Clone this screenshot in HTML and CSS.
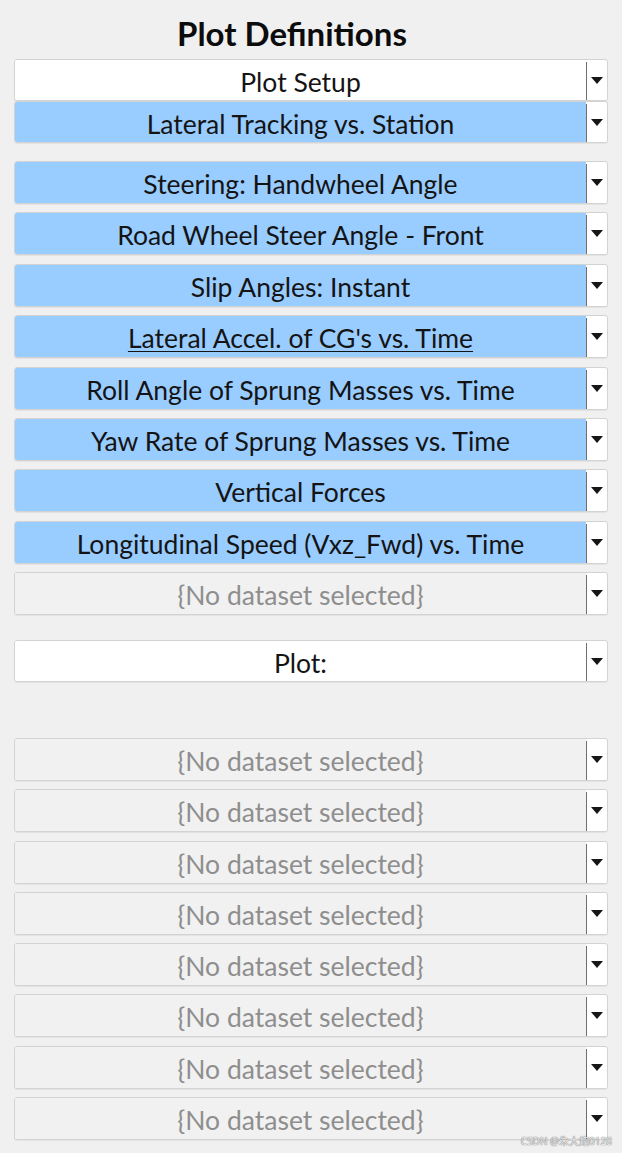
FILE: index.html
```html
<!DOCTYPE html>
<html lang="en">
<head>
<meta charset="utf-8">
<title>Plot Definitions</title>
<link rel="stylesheet" href="styles.css">
</head>
<body>
<div class="panel">
  <h1 class="title">Plot Definitions</h1>

  <div class="group group-top">
    <div class="combo combo-white"><span class="label">Plot Setup</span><span class="btn"><svg class="arrow" viewBox="0 0 12 7"><polygon points="0,0 12,0 6,7"/></svg></span></div>
    <div class="combo combo-blue"><span class="label">Lateral Tracking vs. Station</span><span class="btn"><svg class="arrow" viewBox="0 0 12 7"><polygon points="0,0 12,0 6,7"/></svg></span></div>
  </div>

  <div class="group group-list">
    <div class="combo combo-blue"><span class="label">Steering: Handwheel Angle</span><span class="btn"><svg class="arrow" viewBox="0 0 12 7"><polygon points="0,0 12,0 6,7"/></svg></span></div>
    <div class="combo combo-blue"><span class="label">Road Wheel Steer Angle - Front</span><span class="btn"><svg class="arrow" viewBox="0 0 12 7"><polygon points="0,0 12,0 6,7"/></svg></span></div>
    <div class="combo combo-blue"><span class="label">Slip Angles: Instant</span><span class="btn"><svg class="arrow" viewBox="0 0 12 7"><polygon points="0,0 12,0 6,7"/></svg></span></div>
    <div class="combo combo-blue"><span class="label label-underline">Lateral Accel. of CG's vs. Time</span><span class="btn"><svg class="arrow" viewBox="0 0 12 7"><polygon points="0,0 12,0 6,7"/></svg></span></div>
    <div class="combo combo-blue"><span class="label">Roll Angle of Sprung Masses vs. Time</span><span class="btn"><svg class="arrow" viewBox="0 0 12 7"><polygon points="0,0 12,0 6,7"/></svg></span></div>
    <div class="combo combo-blue"><span class="label">Yaw Rate of Sprung Masses vs. Time</span><span class="btn"><svg class="arrow" viewBox="0 0 12 7"><polygon points="0,0 12,0 6,7"/></svg></span></div>
    <div class="combo combo-blue"><span class="label">Vertical Forces</span><span class="btn"><svg class="arrow" viewBox="0 0 12 7"><polygon points="0,0 12,0 6,7"/></svg></span></div>
    <div class="combo combo-blue"><span class="label">Longitudinal Speed (Vxz_Fwd) vs. Time</span><span class="btn"><svg class="arrow" viewBox="0 0 12 7"><polygon points="0,0 12,0 6,7"/></svg></span></div>
    <div class="combo combo-empty"><span class="label">{No dataset selected}</span><span class="btn"><svg class="arrow" viewBox="0 0 12 7"><polygon points="0,0 12,0 6,7"/></svg></span></div>
  </div>

  <div class="combo combo-white combo-plot"><span class="label">Plot:</span><span class="btn"><svg class="arrow" viewBox="0 0 12 7"><polygon points="0,0 12,0 6,7"/></svg></span></div>

  <div class="group group-list group-bottom">
    <div class="combo combo-empty"><span class="label">{No dataset selected}</span><span class="btn"><svg class="arrow" viewBox="0 0 12 7"><polygon points="0,0 12,0 6,7"/></svg></span></div>
    <div class="combo combo-empty"><span class="label">{No dataset selected}</span><span class="btn"><svg class="arrow" viewBox="0 0 12 7"><polygon points="0,0 12,0 6,7"/></svg></span></div>
    <div class="combo combo-empty"><span class="label">{No dataset selected}</span><span class="btn"><svg class="arrow" viewBox="0 0 12 7"><polygon points="0,0 12,0 6,7"/></svg></span></div>
    <div class="combo combo-empty"><span class="label">{No dataset selected}</span><span class="btn"><svg class="arrow" viewBox="0 0 12 7"><polygon points="0,0 12,0 6,7"/></svg></span></div>
    <div class="combo combo-empty"><span class="label">{No dataset selected}</span><span class="btn"><svg class="arrow" viewBox="0 0 12 7"><polygon points="0,0 12,0 6,7"/></svg></span></div>
    <div class="combo combo-empty"><span class="label">{No dataset selected}</span><span class="btn"><svg class="arrow" viewBox="0 0 12 7"><polygon points="0,0 12,0 6,7"/></svg></span></div>
    <div class="combo combo-empty"><span class="label">{No dataset selected}</span><span class="btn"><svg class="arrow" viewBox="0 0 12 7"><polygon points="0,0 12,0 6,7"/></svg></span></div>
    <div class="combo combo-empty"><span class="label">{No dataset selected}</span><span class="btn"><svg class="arrow" viewBox="0 0 12 7"><polygon points="0,0 12,0 6,7"/></svg></span></div>
  </div>

  <div class="watermark">CSDN @朱大炮0128</div>
</div>
</body>
</html>
```

FILE: styles.css
```css
html, body {
  margin: 0;
  padding: 0;
  background: #f0f0f0;
}

body {
  font-family: Lato, "Noto Sans", "Noto Sans CJK SC", sans-serif;
  color: #111;
}

.panel {
  position: relative;
  width: 622px;
  height: 1153px;
  box-sizing: border-box;
  padding: 0 14px;
  display: flex;
  flex-direction: column;
}

.title {
  margin: 0;
  height: 59px;
  box-sizing: border-box;
  padding: 14px 38px 0 0;
  font-size: 33px;
  line-height: 38px;
  font-weight: 700;
  text-align: center;
  color: #0c0c0c;
}

.group {
  display: flex;
  flex-direction: column;
}

.group-list {
  gap: 8.375px;
  margin-top: 18px;
}

.group-bottom {
  margin-top: 56px;
  gap: 8.3px;
}

.combo {
  display: flex;
  height: 43px;
  box-sizing: border-box;
  border: 1px solid #d3d3d3;
  border-radius: 3px;
  overflow: hidden;
  box-shadow: 0 1px 0 rgba(0, 0, 0, 0.05);
  background: #fff;
}

.group-top .combo {
  height: 42px;
}

.combo-plot {
  margin-top: 25px;
  height: 42px;
}

.label {
  flex: 1;
  display: flex;
  align-items: center;
  justify-content: center;
  padding-top: 3px;
  font-size: 26.5px;
  white-space: nowrap;
  color: #141414;
}

.combo-white .label {
  background: #fff;
}

.combo-blue .label {
  background: #99ccff;
}

.combo-empty .label {
  background: #f1f1f1;
  color: #8e8e8e;
}

.label-underline {
  text-decoration: underline;
  text-underline-offset: 3px;
  text-decoration-thickness: 1px;
}

.btn {
  width: 20px;
  flex: none;
  border-left: 1px solid #6f6f6f;
  background: #fff;
  display: flex;
  align-items: center;
  justify-content: center;
  margin: 2px 0 0 0;
}

.arrow {
  width: 12px;
  height: 7px;
  fill: #161616;
  margin-top: -2px;
}

.watermark {
  position: absolute;
  right: 10px;
  bottom: 5px;
  font-family: "Noto Sans", "Noto Sans CJK SC", sans-serif;
  font-size: 10px;
  color: #e9e9e9;
  text-shadow: 0 0 1px #7a7a7a, 0 0 1px #7a7a7a;
}
```
